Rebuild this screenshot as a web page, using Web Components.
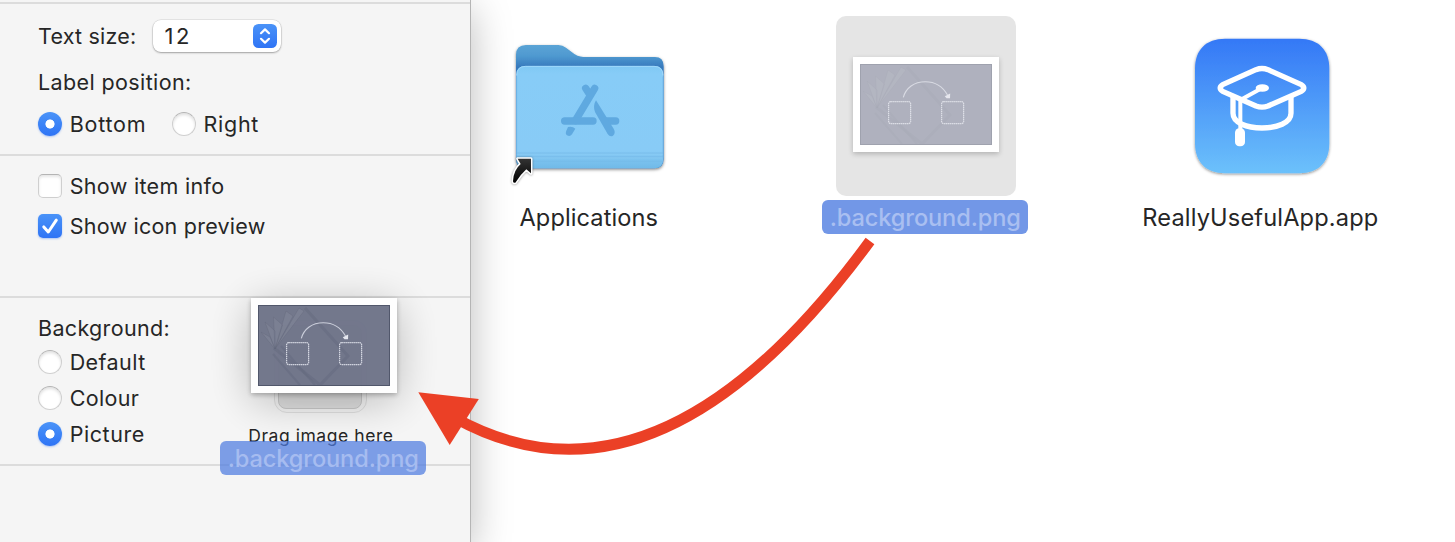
<!DOCTYPE html>
<html lang="en">
<head>
<meta charset="utf-8">
<title>View Options</title>
<style>
html, body { margin: 0; height: 100%; overflow: hidden; background: #fff; }
body { font-family: Inter, "Liberation Sans", sans-serif; color: #262626; }
</style>
</head>
<body>
<finder-scene></finder-scene>
<script>
const define = (name, html, setup) => {
  const t = document.createElement('template');
  t.innerHTML = html;
  customElements.define(name, class extends HTMLElement {
    connectedCallback() {
      if (this.shadowRoot) return;
      this.attachShadow({ mode: 'open' }).append(t.content.cloneNode(true));
      if (setup) setup(this, this.shadowRoot);
    }
  });
};

/* Text run tracked so that its ink spans the width given in "fit". */
define('fit-text', `<style>
  :host { display: block; white-space: nowrap; line-height: 28px; font-size: 21.5px; }
  span { display: block; }
</style><span><slot></slot></span>`, (el, root) => {
  const size = parseFloat(el.getAttribute('size') || 21.5);
  const weight = el.getAttribute('weight') || 400;
  const fit = parseFloat(el.getAttribute('fit'));
  const text = el.textContent;
  el.style.fontSize = size + 'px';
  el.style.fontWeight = weight;
  const c = document.createElement('canvas').getContext('2d');
  c.font = weight + ' ' + size + 'px Inter';
  const m = c.measureText(text);
  const ls = (fit - m.actualBoundingBoxRight - m.actualBoundingBoxLeft) / (text.length - 1);
  const span = root.querySelector('span');
  span.style.letterSpacing = ls.toFixed(3) + 'px';
  span.style.width = fit + 'px';
  span.style.textIndent = m.actualBoundingBoxLeft + 'px';
});

define('radio-item', `<style>
  :host { display: flex; align-items: center; height: 28px; gap: 8.7px; }
  i { box-sizing: border-box; width: 24px; height: 24px; border-radius: 50%; background: #fff; flex: none;
      border: 1px solid #cfcfcf; border-top-color: #b4b4b4; box-shadow: inset 0 2px 3px rgba(0,0,0,.12); }
  :host([checked]) i { border: 0; background: radial-gradient(circle at 50% 50%, #fff 4.2px, transparent 4.9px), linear-gradient(#4a93f8, #2f74f5);
      box-shadow: 0 1px 2px rgba(40,110,240,.35); }
</style><i></i><slot></slot>`);

define('check-item', `<style>
  :host { display: flex; align-items: center; height: 28px; gap: 8.7px; }
  i { box-sizing: border-box; width: 24px; height: 24px; border-radius: 5px; background: #fff; flex: none;
      border: 1px solid #cfcfcf; border-top-color: #b4b4b4; box-shadow: inset 0 2px 3px rgba(0,0,0,.1); }
  svg { display: none; }
  :host([checked]) i { border: 0; background: linear-gradient(#4a93f8, #2f74f5); box-shadow: 0 1px 2px rgba(40,110,240,.35); }
  :host([checked]) svg { display: block; }
</style><i><svg width="24" height="24" viewBox="0 0 24 24"><path d="M5.8 12.9 10.3 18 18.3 6.2" fill="none" stroke="#fff" stroke-width="3" stroke-linecap="round" stroke-linejoin="round"/></svg></i><slot></slot>`);

define('popup-button', `<style>
  :host { box-sizing: border-box; display: flex; align-items: center; justify-content: space-between; width: 128px; height: 32px;
      padding: 0 4px 0 12.5px; background: #fff; border-radius: 8px;
      box-shadow: 0 0 0 .5px rgba(0,0,0,.12), 0 1px 2px rgba(0,0,0,.3); }
  svg { display: block; }
</style><slot></slot>
<svg width="24" height="24" viewBox="0 0 24 24"><defs><linearGradient id="g" x2="0" y2="1"><stop stop-color="#4a93f8"/><stop offset="1" stop-color="#2f74f5"/></linearGradient></defs>
<rect width="24" height="24" rx="5.5" fill="url(#g)"/><path d="M8 9.2 12 5.4l4 3.8M8 14.8l4 3.8 4-3.8" fill="none" stroke="#fff" stroke-width="2.2" stroke-linecap="round" stroke-linejoin="round"/></svg>`);

define('panel-section', `<style>
  :host { display: block; box-sizing: border-box; border-top: 2px solid #dcdcdc; padding-left: 38px; }
</style><slot></slot>`);

define('drop-well', `<style>
  :host { display: flex; flex-direction: column; align-items: center; }
  .well { box-sizing: border-box; width: 93px; height: 93px; border-radius: 13px; background: #f2f2f2; border: 1px solid #dedede; padding: 3.5px; margin-right: 1px; }
  .in { box-sizing: border-box; height: 100%; border-radius: 8px; background: #dedede; border: 1px solid #c8c8c8; }
  fit-text { margin-top: 8.5px; margin-left: 1px; }
</style><div class="well"><div class="in"></div></div><fit-text size="17.5" fit="143.5">Drag image here</fit-text>`);

define('image-thumb', `<style>
  :host { display: block; box-sizing: border-box; width: 146px; height: 95px; padding: 7px; background: #fff; box-shadow: 0 2px 5px rgba(0,0,0,.22); }
  svg { display: block; }
</style><svg width="132" height="81" viewBox="0 0 132 81">
<rect width="132" height="81" fill="#70758a"/>
<g fill="none" stroke="#62677b" stroke-opacity=".5">
<path d="M47 3 90 51 62 80 16 43" stroke-width="3.2" stroke-linejoin="round"/>
<path d="M15 49 42 80M23 41 57 80" stroke-width="2.2"/>
</g>
<g fill="#7d8194" fill-opacity=".7" stroke="#5f6479" stroke-opacity=".5" stroke-width=".7">
<path d="M17 44 3 27l9 5ZM17 44 7 17l10 9ZM17 44 15.5 12l9 8ZM17 44 28 6l7 5ZM17 44 41 3l5 3Z"/></g>
<g fill="none" stroke="#d4d7e2">
<rect x="28.6" y="37.6" width="22" height="22" rx="2" stroke-width=".7" stroke-opacity=".6"/>
<rect x="81.6" y="37.6" width="22" height="22" rx="2" stroke-width=".7" stroke-opacity=".6"/>
<rect x="28.6" y="37.6" width="22" height="22" rx="2" stroke-width="1.2" stroke-dasharray="1.2 .8"/>
<rect x="81.6" y="37.6" width="22" height="22" rx="2" stroke-width="1.2" stroke-dasharray="1.2 .8"/>
<path d="M43.3 33.3C46 24 54 17.7 65.3 17.7 76 17.7 83 23 87.5 31" stroke-width="1.1" stroke-opacity=".9"/></g>
<path d="M84.8 32.3 90.2 29.5 90 34.3 86.5 34.2Z" fill="#e6e8f0"/>
<rect x=".5" y=".5" width="131" height="80" fill="none" stroke="#4e5468"/>
</svg>`);

define('file-label', `<style>
  :host { display: flex; align-items: center; justify-content: center; height: 34px; padding-top: 0; }
  ::slotted(fit-text) { padding-top: 2px; }
  :host([selected]) { width: 206px; border-radius: 6px; background: #7297e7; color: #a9bff1; }
  :host([ghost]) { background: rgba(77,124,224,.72); color: #a6bcf0; }
</style><slot></slot>`);

define('file-item', `<style>
  :host { display: flex; flex-direction: column; align-items: center; width: 180px; flex: none; gap: 4px; }
  .box { width: 180px; height: 180px; border-radius: 10px; display: flex; align-items: center; justify-content: center; }
  :host([selected]) .box { background: #e5e5e5; }
</style><div class="box"><slot name="icon"></slot></div><slot></slot>`);

define('folder-icon', `<style>:host, svg { display: block; }</style>
<svg width="180" height="180" viewBox="0 0 180 180"><defs>
<linearGradient id="b" x2="0" y2="1"><stop stop-color="#5ba4d6"/><stop offset=".09" stop-color="#4f99d0"/><stop offset=".18" stop-color="#3679bd"/><stop offset="1" stop-color="#3679bd"/></linearGradient>
<linearGradient id="f" x2="0" y2="1"><stop stop-color="#7fc8f4"/><stop offset=".08" stop-color="#87ccf7"/><stop offset=".83" stop-color="#88cbf6"/><stop offset="1" stop-color="#70bae8"/></linearGradient>
<linearGradient id="k" x2="0" y2="1"><stop stop-color="#333"/><stop offset="1" stop-color="#000"/></linearGradient>
<filter id="s" x="-10%" y="-10%" width="120%" height="120%"><feDropShadow dx="0" dy="4" stdDeviation="4" flood-opacity=".5"/></filter></defs>
<g transform="translate(-10 4) scale(.33333)">
<g filter="url(#s)"><path d="M78 105Q78 75 108 75H205Q218 75 228 83L246 97Q262 111 280 111H495Q521 111 521 139V417Q521 445 493 445H106Q78 445 78 417Z" fill="url(#b)"/></g>
<path d="M79 166Q79 138 107 138H492Q520 138 520 166V417Q520 445 492 445H107Q79 445 79 417Z" fill="url(#f)"/>
<path d="M80 166Q80 139 107 139H492Q519 139 519 166" fill="none" stroke="#a0d9fb" stroke-width="3"/>
<path d="M80 170V415M519 170V415" stroke="#6eb5e6" stroke-opacity=".7" stroke-width="3"/>
<path d="M80 399H519M80 410H519M80 424H519" stroke="#73b9e7" stroke-width="3" stroke-opacity=".6"/>
<path d="M80 403H519M80 414H519" stroke="#9ad7fb" stroke-width="2" stroke-opacity=".35"/>
<g stroke="#5fa9e0" fill="#5fa9e0" stroke-linecap="round">
<path d="M314 205 256 302M287 205 300 225" stroke-width="22" fill="none"/>
<path d="M224 303H309M350 303H377" stroke-width="22" fill="none"/>
<path d="M318 241Q308 257 315 276L353 342Q360 352 369 347 378 339 371 326Z" stroke="none"/>
<path d="M234 321Q248 318 256 326L246 343Q240 351 231 346 225 341 229 332Z" stroke="none"/></g>
<path d="M83 416H123V460L109 448Q91 464 76 488 70 490 69 484 70 451 92 432Z" fill="url(#k)" stroke="#fff" stroke-width="9" stroke-linejoin="round" paint-order="stroke" style="filter:drop-shadow(0 1px 3px rgba(0,0,0,.4))"/>
</g></svg>`);

define('app-icon', `<style>:host, svg { display: block; }</style>
<svg width="180" height="180" viewBox="0 0 180 180"><defs>
<linearGradient id="a" x2="0" y2="1"><stop stop-color="#3478f6"/><stop offset="1" stop-color="#6cc1fb"/></linearGradient>
<filter id="s" x="-10%" y="-10%" width="120%" height="120%"><feDropShadow dx="0" dy="3" stdDeviation="4" flood-opacity=".45"/></filter></defs>
<g transform="translate(-42 4) scale(.33333)">
<path filter="url(#s)" fill="url(#a)" d="M285 56H508C565 56 598 89 598 146V370C598 427 565 460 508 460H285C228 460 195 427 195 370V146C195 89 228 56 285 56Z"/>
<g fill="none" stroke="#fff" stroke-width="16" stroke-linejoin="round" stroke-linecap="round">
<path d="M378 149Q396 142 414 149L514 194Q529 204 514 214L414 258Q396 265 378 258L278 214Q263 204 278 194Z"/>
<path d="M309 231V280C309 309 351 324 396 324S483 309 483 280V231"/>
<path d="M395 205 331 240V335" stroke-width="12"/></g>
<ellipse cx="397" cy="204" rx="20" ry="11.5" fill="#fff"/><rect x="315" y="325" width="30" height="54" rx="13" fill="#fff"/>
</g></svg>`);

define('options-panel', `<style>
  :host { box-sizing: border-box; display: block; width: 471px; height: 542px; padding-top: 2px; background: #f5f5f5; border-right: 1px solid #b5b5b5; flex: none;
      box-shadow: 0 10px 38px rgba(0,0,0,.27); position: relative; }
  .row { display: flex; align-items: center; }
  .one { height: 152px; padding-top: 14px; }
  .two { height: 142px; padding-top: 16px; }
  .three { height: 168px; padding-top: 16px; display: grid; grid-template-columns: 210px 145px; align-items: start; }
  .four { height: 78px; }
  fit-text { margin-left: 1px; }
  radio-item > fit-text, check-item > fit-text, popup-button > fit-text { margin-left: 0; }
</style>
<panel-section class="one">
  <div class="row" style="height:36px;gap:18px"><fit-text fit="96">Text size:</fit-text><popup-button><fit-text fit="22.5" size="22">12</fit-text></popup-button></div>
  <div class="row" style="margin:14px 0"><fit-text fit="151">Label position:</fit-text></div>
  <div class="row" style="gap:27px"><radio-item checked><fit-text fit="74">Bottom</fit-text></radio-item><radio-item><fit-text fit="54">Right</fit-text></radio-item></div>
</panel-section>
<panel-section class="two">
  <check-item style="margin-bottom:12px"><fit-text fit="152.5">Show item info</fit-text></check-item>
  <check-item checked><fit-text fit="194">Show icon preview</fit-text></check-item>
</panel-section>
<panel-section class="three">
  <div><fit-text fit="129.5">Background:</fit-text>
    <radio-item style="margin-top:6px"><fit-text fit="74.5">Default</fit-text></radio-item>
    <radio-item style="margin:8px 0"><fit-text fit="68">Colour</fit-text></radio-item>
    <radio-item checked><fit-text fit="73">Picture</fit-text></radio-item></div>
  <drop-well style="margin-top:6px"></drop-well>
</panel-section>
<panel-section class="four"></panel-section>`);

define('drag-ghost', `<style>
  :host { position: absolute; left: 220px; top: 298px; display: flex; flex-direction: column; width: 206px; gap: 48px; }
  image-thumb { margin-left: 31px; opacity: .975; box-shadow: 0 2px 5px rgba(0,0,0,.28), 0 8px 44px rgba(0,0,0,.25); }
</style><image-thumb></image-thumb><file-label selected ghost><fit-text size="23.6" weight="500" fit="188.5">.background.png</fit-text></file-label>`);

define('arrow-mark', `<style>:host { position: absolute; left: 410px; top: 230px; } svg { display: block; }</style>
<svg width="475" height="235" viewBox="410 230 475 235"><path d="M455 418Q658 530 870 241" fill="none" stroke="#eb4026" stroke-width="10.8"/>
<path d="M418.3 392.3 478.8 399 449.7 445Z" fill="#eb4026"/></svg>`);

define('finder-scene', `<style>
  :host { display: flex; position: relative; width: 1455px; height: 542px; overflow: hidden; background: #fff; }
  .files { display: flex; gap: 156px; padding: 16px 0 0 29px; align-items: flex-start; }
  .faded { position: relative; margin-bottom: 3px; }
  .veil { position: absolute; inset: 7px; background: rgba(229,230,234,.54); }
</style>
<options-panel></options-panel>
<div class="files">
  <file-item><folder-icon slot="icon"></folder-icon><file-label style="margin-left:-3px"><fit-text size="23.6" fit="138">Applications</fit-text></file-label></file-item>
  <file-item selected><div slot="icon" class="faded"><image-thumb></image-thumb><div class="veil"></div></div><file-label selected style="margin-left:-2px"><fit-text size="23.6" weight="500" fit="188.5">.background.png</fit-text></file-label></file-item>
  <file-item><app-icon slot="icon"></app-icon><file-label style="margin-left:-2px"><fit-text size="23.6" fit="233.5">ReallyUsefulApp.app</fit-text></file-label></file-item>
</div>
<drag-ghost></drag-ghost>
<arrow-mark></arrow-mark>`);
</script>
</body>
</html>
